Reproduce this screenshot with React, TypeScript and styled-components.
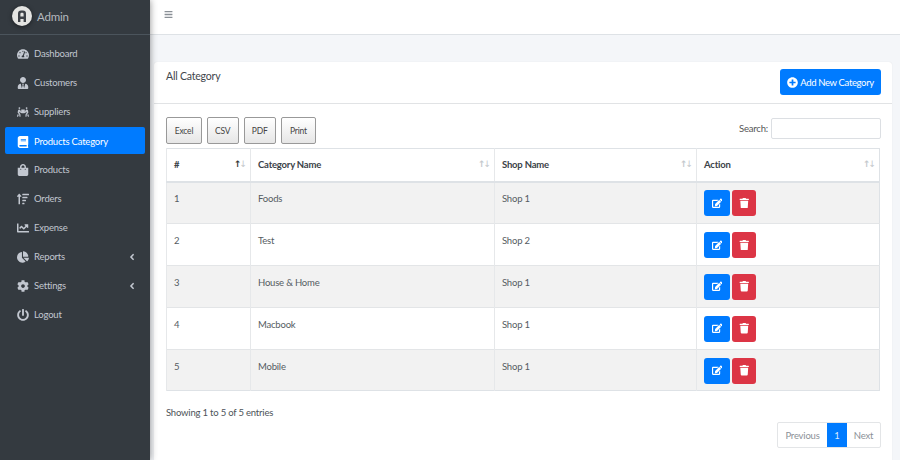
import React from "react";
import styled, { createGlobalStyle } from "styled-components";
import {
  FaTachometerAlt, FaUserTie, FaPeopleCarry, FaBook, FaShoppingBag, FaSortAmountUp,
  FaChartLine, FaChartPie, FaCog, FaPowerOff, FaAngleLeft, FaEdit, FaTrash, FaPlusCircle, FaBars,
} from "react-icons/fa";

const Global = createGlobalStyle`
  html, body { margin: 0; padding: 0; height: 100%; overflow: hidden; background: #f4f6f9; }
  * { box-sizing: border-box; }
  body { font-family: "Lato", "Open Sans", sans-serif; font-size: 9.5px; letter-spacing: -0.2px; color: #3f464c; }
  button { letter-spacing: inherit; }
`;

const Page = styled.div`display: flex; width: 900px; height: 460px; overflow: hidden;`;
const Sidebar = styled.aside`
  width: 150px; flex: none; background: #343a40; color: #c2c7d0; position: relative; z-index: 2;
  box-shadow: 0 0 7px rgba(0,0,0,.45);
`;
const Brand = styled.div`
  height: 35px; display: flex; align-items: center; gap: 5px; padding: 0 0 2px 12px;
  border-bottom: 1px solid #4b545c; font-size: 11.5px; color: #b4b9bf;
`;
const Logo = styled.svg`width: 20px; height: 20px; flex: none; filter: drop-shadow(0 1px 2px rgba(0,0,0,.5));`;
const Nav = styled.nav`display: flex; flex-direction: column; padding: 4px 5px 0 5px;`;
const NavItem = styled.div<{ $active?: boolean }>`
  height: 27px; margin: ${(p) => (p.$active ? "1px 0" : "0 0 2px")}; display: flex; align-items: center; padding: 2px 8px 0 12px;
  border-radius: 2px; white-space: nowrap;
  color: ${(p) => (p.$active ? "#fff" : "#c2c7d0")};
  background: ${(p) => (p.$active ? "#007bff" : "transparent")};
`;
const NavIcon = styled.span`
  width: 12px; margin-right: 5px; display: flex; justify-content: center; font-size: 12px; flex: none;
`;
const Caret = styled.span`margin-left: auto; display: flex; font-size: 10px;`;

const Main = styled.main`flex: 1; min-width: 0; display: flex; flex-direction: column;`;
const Topbar = styled.header`
  height: 35px; flex: none; background: #fff; border-bottom: 1px solid #dee2e6;
  display: flex; align-items: center; padding: 0 0 6px 14px; color: #8a9096; font-size: 9px;
`;
const Content = styled.div`flex: 1; padding: 27px 8px 0 4px;`;
const Card = styled.section`background: #fff; border-radius: 3px 3px 0 0; height: 400px; box-shadow: 0 0 1px rgba(0,0,0,.125);`;
const CardHead = styled.div`
  height: 42px; display: flex; justify-content: space-between; align-items: flex-start;
  padding: 7px 11px 0 12px; border-bottom: 1px solid #e1e3e5;
`;
const CardTitle = styled.h3`margin: 0; font-weight: 400; font-size: 10.5px; line-height: 14px; color: #3f464c;`;
const AddButton = styled.button`
  height: 26px; width: 101px; border: 0; border-radius: 3px; background: #007bff; color: #fff;
  font: inherit; letter-spacing: -0.35px; display: flex; align-items: center; justify-content: center; gap: 2px; padding: 0;
  svg { font-size: 11px; }
`;
const CardBody = styled.div`padding: 13px 11px 0 12px;`;
const Tools = styled.div`display: flex; justify-content: space-between; align-items: flex-start; height: 31px;`;
const ExportGroup = styled.div`display: flex; gap: 5px;`;
const ExportButton = styled.button<{ $w: number }>`
  width: ${(p) => p.$w}px; height: 27px; border: 1px solid #999; border-radius: 2px; padding: 0; color: #444;
  background: linear-gradient(#fff, #e6e6e6); font: inherit; font-size: 8.5px; letter-spacing: -0.2px;
`;
const SearchBox = styled.label`display: flex; align-items: center; gap: 3px; margin-top: 1px; color: #555;`;
const SearchInput = styled.input`width: 110px; height: 21px; border: 1px solid #dcdfe3; border-radius: 2px; background: #fff;`;
const Table = styled.table`
  width: 713px; border-collapse: collapse; table-layout: fixed; border: 1px solid #dee2e6;
`;
const Th = styled.th<{ $w: number }>`
  width: ${(p) => p.$w}px; height: 33px; border-left: 1px solid #e6e8ea; border-bottom: 2px solid #dee2e6;
  text-align: left; padding: 0 7px; font-size: 9.5px; font-weight: 700; color: #3b4248; position: relative;
`;
const Sort = styled.span<{ $on?: boolean }>`
  position: absolute; right: 5px; top: 10px; font-family: "DejaVu Sans", sans-serif; font-size: 9px; line-height: 10px;
  letter-spacing: -2px; color: #c4c8cc; font-weight: 400;
  b { font-weight: 700; color: ${(p) => (p.$on ? "#333" : "#c4c8cc")}; }
`;
const Tr = styled.tr<{ $odd: boolean }>`background: ${(p) => (p.$odd ? "#f2f2f2" : "#fff")};`;
const Td = styled.td`
  height: 41.9px; border-left: 1px solid #e6e8ea; border-top: 1px solid #e3e5e7; padding: 0 7px 8px;
  color: #555c62; vertical-align: middle;
`;
const ActionCell = styled(Td)`padding: 1px 7px 0;`;
const Actions = styled.div`display: flex; gap: 2px;`;
const IconButton = styled.button<{ $c: string; $w: number }>`
  width: ${(p) => p.$w}px; height: 26px; border: 0; border-radius: 3px; padding: 0; color: #fff; background: ${(p) => p.$c};
  display: flex; align-items: center; justify-content: center; font-size: 10.5px;
`;
const Foot = styled.div`display: flex; justify-content: space-between; align-items: flex-start; padding-top: 15px;`;
const Info = styled.div`color: #4d5359; line-height: 13px;`;
const Pager = styled.div`
  display: flex; margin-top: 16px; height: 26px; border: 1px solid #e3e5e7; border-radius: 2px; color: #8b9197;
`;
const PageLink = styled.span<{ $active?: boolean; $w: number }>`
  width: ${(p) => p.$w}px; display: flex; align-items: center; justify-content: center;
  background: ${(p) => (p.$active ? "#007bff" : "transparent")}; color: ${(p) => (p.$active ? "#dbe9ff" : "inherit")};
`;

const nav = [
  [FaTachometerAlt, "Dashboard"], [FaUserTie, "Customers"], [FaPeopleCarry, "Suppliers"],
  [FaBook, "Products Category", true], [FaShoppingBag, "Products"], [FaSortAmountUp, "Orders"],
  [FaChartLine, "Expense"], [FaChartPie, "Reports", false, true], [FaCog, "Settings", false, true], [FaPowerOff, "Logout"],
] as const;
const rows = [["1", "Foods", "Shop 1"], ["2", "Test", "Shop 2"], ["3", "House & Home", "Shop 1"], ["4", "Macbook", "Shop 1"], ["5", "Mobile", "Shop 1"]];
const cols = [["#", 84], ["Category Name", 244], ["Shop Name", 202], ["Action", 183]] as const;

export default function App() {
  return (
    <Page>
      <Global />
      <Sidebar>
        <Brand>
          <Logo viewBox="0 0 20 20">
            <circle cx="10" cy="10" r="10" fill="#e4e4e2" />
            <path d="M6 16V7.5Q6 4.5 9 4.5h2Q14 4.5 14 7.5V16h-2.4v-3H8.4v3zM8.4 10.6h3.2V8q0-1.2-1.2-1.2h-.8Q8.4 6.8 8.4 8z" fill="#3d4147" />
          </Logo>
          Admin
        </Brand>
        <Nav>
          {nav.map(([Icon, label, active, caret]) => (
            <NavItem key={label} $active={active as boolean}>
              <NavIcon><Icon /></NavIcon>
              {label}
              {caret && <Caret><FaAngleLeft /></Caret>}
            </NavItem>
          ))}
        </Nav>
      </Sidebar>
      <Main>
        <Topbar><FaBars /></Topbar>
        <Content>
          <Card>
            <CardHead>
              <CardTitle>All Category</CardTitle>
              <AddButton><FaPlusCircle /> Add New Category</AddButton>
            </CardHead>
            <CardBody>
              <Tools>
                <ExportGroup>
                  <ExportButton $w={36}>Excel</ExportButton>
                  <ExportButton $w={31.5}>CSV</ExportButton>
                  <ExportButton $w={32.5}>PDF</ExportButton>
                  <ExportButton $w={35}>Print</ExportButton>
                </ExportGroup>
                <SearchBox>Search: <SearchInput /></SearchBox>
              </Tools>
              <Table>
                <thead>
                  <tr>
                    {cols.map(([c, w], i) => (
                      <Th key={c} $w={w}>{c}<Sort $on={i === 0}><b>↑</b>↓</Sort></Th>
                    ))}
                  </tr>
                </thead>
                <tbody>
                  {rows.map((r, i) => (
                    <Tr key={r[0]} $odd={i % 2 === 0}>
                      {r.map((v, j) => <Td key={j}>{v}</Td>)}
                      <ActionCell>
                        <Actions>
                          <IconButton $c="#007bff" $w={26}><FaEdit /></IconButton>
                          <IconButton $c="#dc3545" $w={24}><FaTrash /></IconButton>
                        </Actions>
                      </ActionCell>
                    </Tr>
                  ))}
                </tbody>
              </Table>
              <Foot>
                <Info>Showing 1 to 5 of 5 entries</Info>
                <Pager>
                  <PageLink $w={49}>Previous</PageLink>
                  <PageLink $w={20} $active>1</PageLink>
                  <PageLink $w={33}>Next</PageLink>
                </Pager>
              </Foot>
            </CardBody>
          </Card>
        </Content>
      </Main>
    </Page>
  );
}
